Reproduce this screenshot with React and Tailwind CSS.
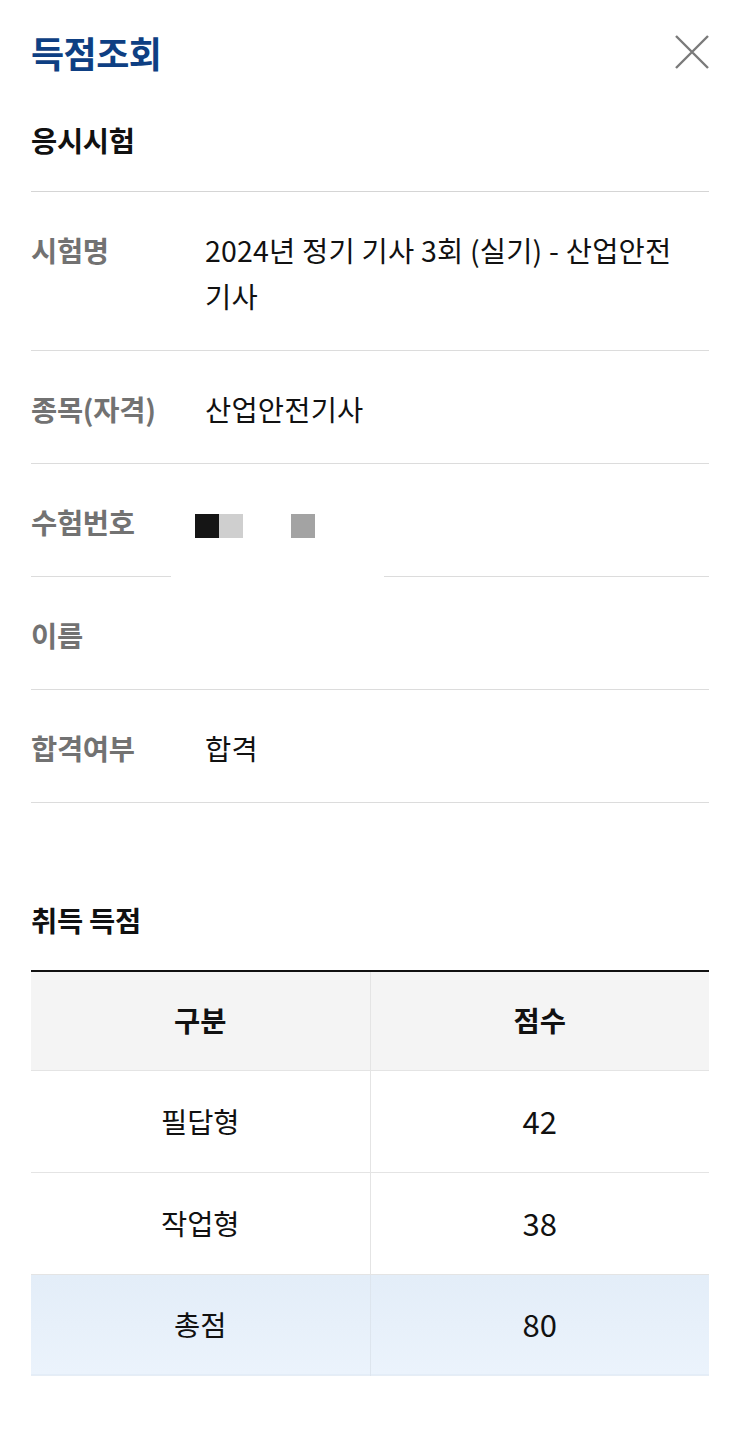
const FONT = { fontFamily: '"Noto Sans CJK KR", "Noto Sans", sans-serif' };

const ROWS = [
  { label: "시험명", value: "2024년 정기 기사 3회 (실기) - 산업안전기사" },
  { label: "종목(자격)", value: "산업안전기사" },
  { label: "수험번호", redacted: true },
  { label: "이름", value: "" },
  { label: "합격여부", value: "합격" },
];

const SCORES = [
  { name: "필답형", score: 42 },
  { name: "작업형", score: 38 },
];

function InfoRow({ row }) {
  return (
    <div className={row.redacted ? "" : "border-b border-[#dcdcdc]"}>
      <div className="flex pt-[35px] pb-[31px]">
        <div className="w-[174px] shrink-0 text-[28.5px] leading-[46px] font-bold text-[#727272] tracking-[-0.3px]">
          {row.label}
        </div>
        {row.redacted ? (
          <div className="flex items-center h-[46px] ml-[-10px] pt-[8px]">
            <span className="w-6 h-6 bg-[#151515]" />
            <span className="w-6 h-6 bg-[#cfcfcf]" />
            <span className="w-6 h-6 ml-12 bg-[#a3a3a3]" />
          </div>
        ) : (
          <div className="flex-1 text-[28.5px] leading-[46px] text-[#111] pr-[18px] tracking-[0.2px]">
            {row.value}
          </div>
        )}
      </div>
      {row.redacted && (
        <div className="flex justify-between">
          <div className="w-[140px] h-px bg-[#dcdcdc]" />
          <div className="w-[325px] h-px bg-[#dcdcdc]" />
        </div>
      )}
    </div>
  );
}

export default function App() {
  return (
    <div className="min-h-[1429px] bg-white px-[31px] pt-[30px]" style={FONT}>
      {/* header */}
      <div className="flex items-center justify-between">
        <h1 className="text-[36px] leading-[44px] font-bold text-[#0e3f83] tracking-[-0.5px]">
          득점조회
        </h1>
        <svg width="36" height="36" viewBox="0 0 36 36" className="mr-[-1px]">
          <path d="M2 2 L34 34 M34 2 L2 34" stroke="#7a7a7a" strokeWidth="2.4" fill="none" />
        </svg>
      </div>

      {/* exam info */}
      <div className="mt-[48px] pb-[33px] border-b border-[#d5d5d5] text-[28.5px] leading-[36px] font-bold text-[#111] tracking-[-0.3px]">
        응시시험
      </div>
      {ROWS.map((row) => (
        <InfoRow key={row.label} row={row} />
      ))}

      {/* scores */}
      <div className="mt-[99px] mb-[32px] text-[28.5px] leading-[36px] font-bold text-[#111] tracking-[-0.3px]">
        취득 득점
      </div>
      <table className="w-full border-collapse border-t-2 border-[#111] text-[28.5px] text-[#111] table-fixed">
        <thead>
          <tr className="bg-[#f4f4f4] h-[99px] border-b border-[#e4e4e4]">
            <th className="font-bold border-r border-[#e4e4e4]">구분</th>
            <th className="font-bold">점수</th>
          </tr>
        </thead>
        <tbody>
          {SCORES.map((s) => (
            <tr key={s.name} className="h-[102px] border-b border-[#e4e4e4]">
              <td className="text-center border-r border-[#e4e4e4]">{s.name}</td>
              <td className="text-center text-[31px]">{s.score}</td>
            </tr>
          ))}
          <tr className="h-[101px] bg-gradient-to-b from-[#e3edf8] to-[#ebf3fc] border-b border-[#e6edf5]">
            <td className="text-center border-r border-[#dde5ee]">총점</td>
            <td className="text-center text-[31px]">80</td>
          </tr>
        </tbody>
      </table>
    </div>
  );
}
